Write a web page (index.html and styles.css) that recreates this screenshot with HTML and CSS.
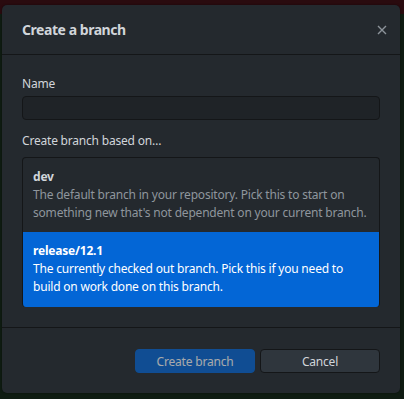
FILE: index.html
```html
<!DOCTYPE html>
<html>
<head>
<meta charset="utf-8">
<link rel="stylesheet" href="styles.css">
</head>
<body>
<div class="backdrop">
  <div class="dialog">
    <header class="dialog-header">
      <h1 class="title">Create a branch</h1>
      <button class="close" aria-label="Close">
        <svg width="10" height="10" viewBox="0 0 10 10"><path d="M1 1L9 9M9 1L1 9" stroke="#8c939a" stroke-width="1.4" fill="none"/></svg>
      </button>
    </header>
    <div class="dialog-content">
      <label class="label">Name</label>
      <div class="input"></div>
      <div class="label label-gap">Create branch based on…</div>
      <div class="list">
        <div class="item">
          <div class="item-title">dev</div>
          <div class="item-desc">The default branch in your repository. Pick this to start on something new that's not dependent on your current branch.</div>
        </div>
        <div class="item selected">
          <div class="item-title">release/12.1</div>
          <div class="item-desc">The currently checked out branch. Pick this if you need to build on work done on this branch.</div>
        </div>
      </div>
    </div>
    <footer class="dialog-footer">
      <button class="btn btn-primary">Create branch</button>
      <button class="btn">Cancel</button>
    </footer>
  </div>
</div>
</body>
</html>
```
FILE: styles.css
```css
html, body {
  margin: 0;
  padding: 0;
}
body {
  width: 404px;
  height: 399px;
  overflow: hidden;
  background: linear-gradient(to bottom, #2a0b0f 0, #2a0b0f 14px, #0f1c12 14px, #0f1c12 100%);
  font-family: "Noto Sans", "Open Sans", sans-serif;
  font-size: 12px;
  letter-spacing: -0.2px;
  color: #d1d5da;
}
.backdrop {
  padding: 5px 4px 0 2px;
}
.dialog {
  background: #24292e;
  border-radius: 5px;
  display: flex;
  flex-direction: column;
  box-shadow: 0 0 2px rgba(0,0,0,0.5);
}
.dialog-header {
  height: 49px;
  border-bottom: 1px solid #141618;
  display: flex;
  align-items: center;
  justify-content: space-between;
  padding: 0 12px 0 20px;
}
.title {
  margin: 0;
  font-size: 14px;
  font-weight: 700;
  letter-spacing: -0.45px;
  color: #d1d5da;
}
.close {
  background: none;
  border: 0;
  padding: 0;
  width: 12px;
  height: 12px;
  display: flex;
  align-items: center;
  justify-content: center;
}
.dialog-content {
  padding: 21px 20px 20px;
  display: flex;
  flex-direction: column;
  border-bottom: 1px solid #141618;
}
.label {
  line-height: 16px;
  color: #d1d5da;
}
.label-gap {
  margin-top: 13px;
}
.input {
  margin-top: 4px;
  height: 22px;
  background: #1f2327;
  border: 1px solid #141618;
  border-radius: 4px;
}
.list {
  margin-top: 8px;
  border: 1px solid #141618;
  border-bottom: 0;
  border-radius: 4px;
  overflow: hidden;
}
.item {
  padding: 10px 10px 10px 10px;
  line-height: 18px;
}
.item-title {
  font-weight: 700;
  color: #d1d5da;
}
.item-desc {
  color: #8f969d;
}
.item.selected {
  background: #0366d6;
  margin: 0 -1px;
  padding: 10px 11px 11px;
}
.item.selected .item-title,
.item.selected .item-desc {
  color: #ffffff;
}
.dialog-footer {
  display: flex;
  justify-content: flex-end;
  gap: 5px;
  padding: 21px 20px 20px;
}
.btn {
  width: 120px;
  height: 24px;
  border-radius: 4px;
  border: 1px solid #141618;
  background: #2f363d;
  color: #d1d5da;
  font-family: inherit;
  font-size: 12px;
  letter-spacing: -0.2px;
  padding: 0;
}
.btn-primary {
  background: #0366d6;
  border-color: #0366d6;
  color: #ffffff;
  opacity: 0.6;
}
```
